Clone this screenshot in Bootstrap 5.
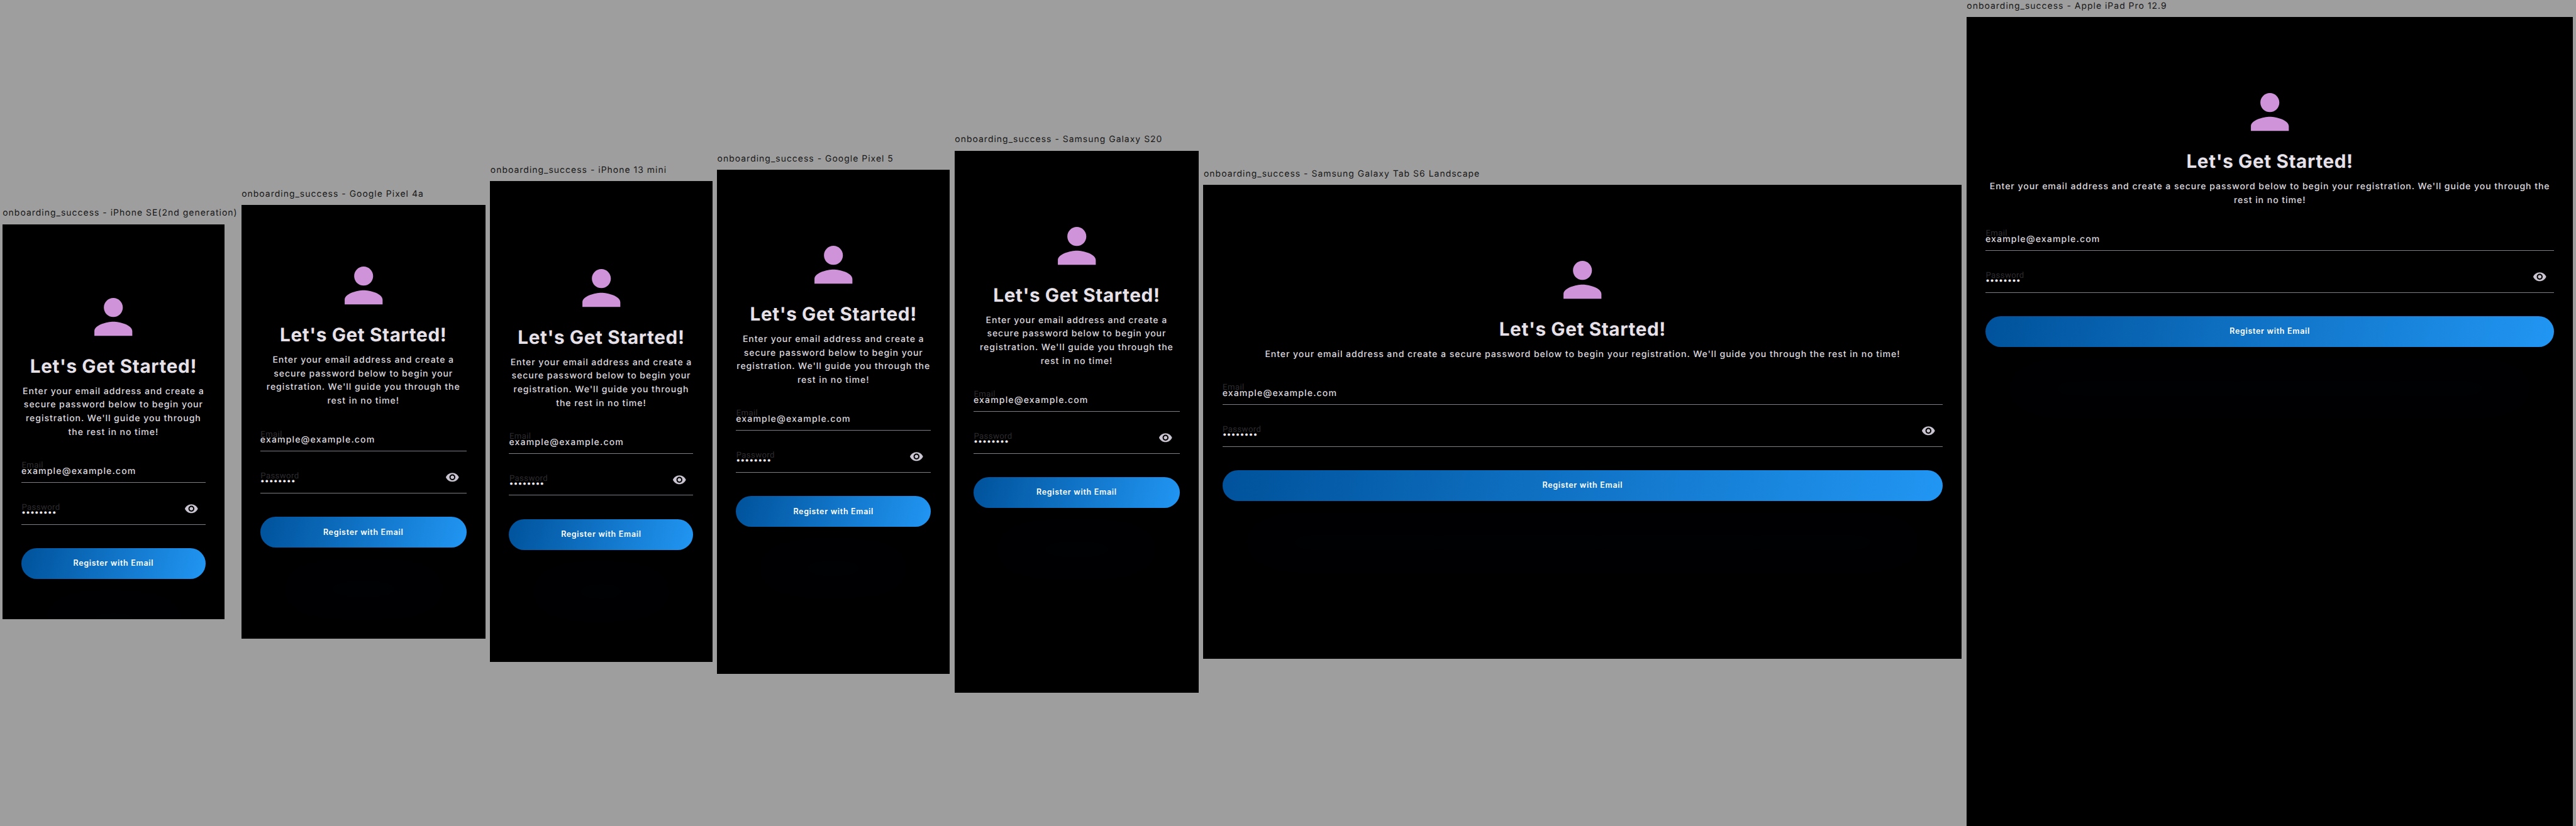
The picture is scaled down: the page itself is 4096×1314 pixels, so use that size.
<!DOCTYPE html>
<html lang="en">
<head>
<meta charset="utf-8">
<title>onboarding_success</title>
<link href="https://cdn.jsdelivr.net/npm/bootstrap@5.3.0/dist/css/bootstrap.min.css" rel="stylesheet">
<style>
  /* 1rem is ten design units */
  html { font-size: 9.4204px; }
  body { background: #9e9e9e; font-family: Inter, "Liberation Sans", sans-serif; overflow: hidden; font-size: 1.5rem; text-rendering: geometricPrecision; }
  .stage { height: 139.5rem; width: 434.8rem; padding-left: .4rem; gap: .8rem; }
  .device-name { height: 2.9rem; font-size: 1.48rem; line-height: 2rem; padding: .1rem 0 0 .05rem; letter-spacing: .108rem; color: #161616; white-space: nowrap; font-weight: 400; }
  .screen { background: #000; padding: 0 3.2rem; }
  .person { width: 9.6rem; height: 9.6rem; fill: #ce93d8; }
  .headline { margin: 1.76rem 0 1.08rem; font-size: 3.15rem; line-height: 3.8rem; font-weight: 700; letter-spacing: .068rem; color: #e6e1e9; white-space: nowrap; }
  .intro { margin: 0 0 2.4rem; line-height: 2.3rem; font-weight: 500; letter-spacing: .0975rem; color: #dcd8df; white-space: nowrap; }
  .field { height: 5rem; border-bottom: 1px solid #7f7c84; color: #dcd8df; font-weight: 500; }
  .field + .field { margin-top: 2.05rem; }
  .hint { top: 1.3rem; left: .05rem; font: 400 1.4rem/1.8rem Roboto, sans-serif; letter-spacing: .04rem; color: #2c2b2e; }
  .entry { padding-top: 2.1rem; line-height: 2rem; letter-spacing: .118rem; }
  .secret { padding-top: 1.94rem; font-size: 1.32rem; font-weight: 400; line-height: 2rem; color: #f0ebf3; }
  .eye { width: 2.4rem; height: 2.4rem; margin: 1.1rem 1.2rem 0 0; fill: #cac4d0; }
  .register { height: 5.2rem; margin-top: 4rem; border: 0; border-radius: 2.6rem; font-size: 1.32rem; font-weight: 600; letter-spacing: .076rem; color: #fff;
    background: linear-gradient(105deg, #00529b, #2196f3); box-shadow: 0 9.6rem 12rem rgba(20, 90, 240, .03); }
</style>
</head>
<body>
<svg class="d-none" xmlns="http://www.w3.org/2000/svg">
  <symbol id="person" viewBox="0 0 24 24"><path d="M12 12c2.21 0 4-1.79 4-4s-1.79-4-4-4-4 1.79-4 4 1.79 4 4 4zm0 2c-2.67 0-8 1.34-8 4v2h16v-2c0-2.66-5.33-4-8-4z"/></symbol>
  <symbol id="eye" viewBox="0 0 24 24"><path d="M12 4.5C7 4.5 2.73 7.61 1 12c1.73 4.39 6 7.5 11 7.5s9.27-3.11 11-7.5c-1.73-4.39-6-7.5-11-7.5zM12 17c-2.76 0-5-2.24-5-5s2.24-5 5-5 5 2.24 5 5-2.24 5-5 5zm0-8c-1.66 0-3 1.34-3 3s1.34 3 3 3 3-1.34 3-3-1.34-3-3-3z"/></symbol>
</svg>
<main class="stage d-flex align-items-center" id="stage"></main>
<script>
  const narrow = ["Enter your email address and create a", "secure password below to begin your", "registration. We'll guide you through", "the rest in no time!"];
  const medium = ["Enter your email address and create a", "secure password below to begin your", "registration. We'll guide you through the", "rest in no time!"];
  const sentence = "Enter your email address and create a secure password below to begin your registration. We'll guide you through the";
  // column width, screen width, screen height and top inset, in design units
  const devices = [
    { name: "iPhone SE(2nd generation)", col: 395.3, w: 375, h: 667, top: 108.5, lines: narrow },
    { name: "Google Pixel 4a", col: 412, w: 412, h: 732, top: 88.2, lines: medium },
    { name: "iPhone 13 mini", col: 375, w: 375, h: 812, top: 132.1, lines: narrow },
    { name: "Google Pixel 5", col: 393, w: 393, h: 851, top: 112.6, lines: medium },
    { name: "Samsung Galaxy S20", col: 412, w: 412, h: 915, top: 112.6, lines: medium },
    { name: "Samsung Galaxy Tab S6 Landscape", col: 1280, w: 1280, h: 800, top: 112.5, lines: [sentence + " rest in no time!"] },
    { name: "Apple iPad Pro 12.9", col: 1024, w: 1024, h: 1366, top: 112.4, lines: [sentence, "rest in no time!"] }
  ];
  document.getElementById("stage").innerHTML = devices.map(d => `
    <section class="flex-shrink-0" style="width:${d.col / 10}rem">
      <div class="device-name">onboarding_success - ${d.name}</div>
      <div class="screen overflow-hidden" style="width:${d.w / 10}rem;height:${d.h / 10}rem;padding-top:${d.top / 10}rem">
        <svg class="person d-block mx-auto"><use href="#person"/></svg>
        <h1 class="headline text-center">Let's Get Started!</h1>
        <p class="intro text-center">${d.lines.join("<br>")}</p>
        <div class="field position-relative"><span class="hint position-absolute">Email</span><div class="entry position-relative">example@example.com</div></div>
        <div class="field position-relative d-flex justify-content-between"><span class="hint position-absolute">Password</span><div class="secret position-relative">••••••••</div><svg class="eye"><use href="#eye"/></svg></div>
        <button class="register btn w-100 p-0 d-flex align-items-center justify-content-center" type="button">Register with Email</button>
      </div>
    </section>`).join("");
</script>
<script src="https://cdn.jsdelivr.net/npm/bootstrap@5.3.0/dist/js/bootstrap.bundle.min.js"></script>
</body>
</html>
